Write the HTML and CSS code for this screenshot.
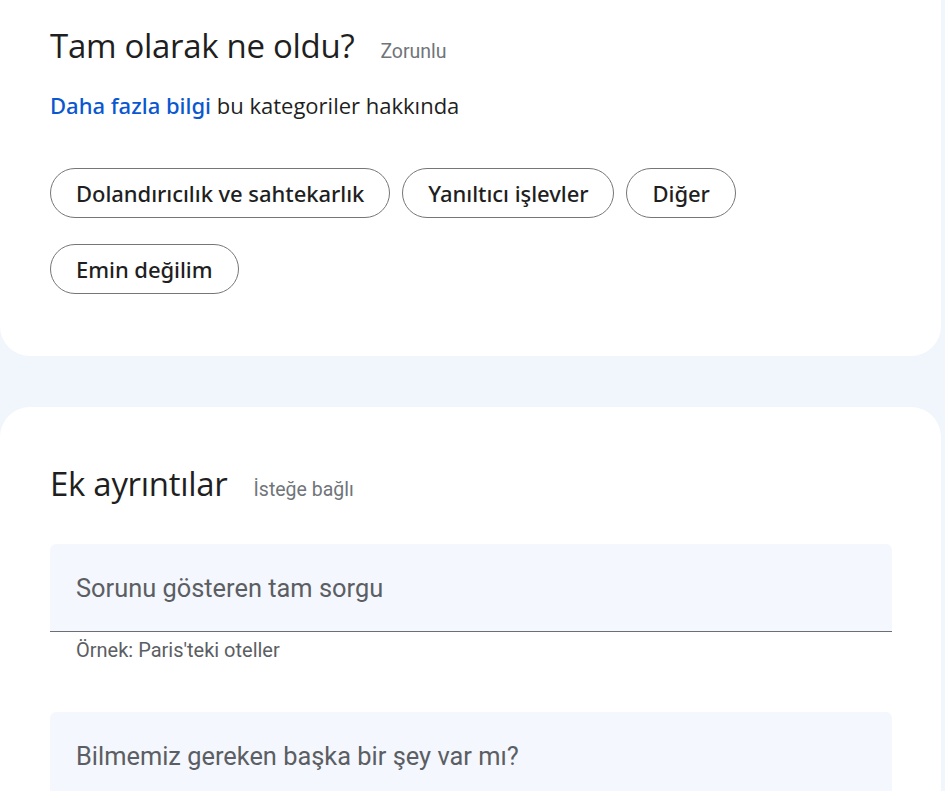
FILE: index.html
```html
<!DOCTYPE html>
<html lang="tr">
<head>
<meta charset="utf-8">
<title>Geri bildirim</title>
<link rel="stylesheet" href="styles.css">
</head>
<body>
<div class="page">
  <section class="card card-top">
    <div class="title-row">
      <h2 class="title">Tam olarak ne oldu?</h2>
      <span class="tag">Zorunlu</span>
    </div>
    <p class="info"><a class="link" href="#">Daha fazla bilgi</a> bu kategoriler hakkında</p>
    <div class="chips">
      <button class="chip">Dolandırıcılık ve sahtekarlık</button>
      <button class="chip">Yanıltıcı işlevler</button>
      <button class="chip">Diğer</button>
      <button class="chip">Emin değilim</button>
    </div>
  </section>
  <section class="card card-bottom">
    <div class="title-row">
      <h2 class="title">Ek ayrıntılar</h2>
      <span class="tag">İsteğe bağlı</span>
    </div>
    <div class="field">
      <div class="field-box"><span class="placeholder">Sorunu gösteren tam sorgu</span></div>
      <div class="helper">Örnek: Paris'teki oteller</div>
    </div>
    <div class="field field-next">
      <div class="field-box"><span class="placeholder">Bilmemiz gereken başka bir şey var mı?</span></div>
    </div>
  </section>
</div>
</body>
</html>
```
FILE: styles.css
```css
html, body {
  margin: 0;
  padding: 0;
}
body {
  background: #f1f5fc;
  font-family: "Open Sans", "Noto Sans", sans-serif;
  color: #1f1f1f;
  overflow: hidden;
  height: 791px;
}
.page {
  padding-right: 4px;
  display: flex;
  flex-direction: column;
  gap: 51px;
}
.card {
  background: #ffffff;
  padding-left: 50px;
  padding-right: 49px;
}
.card-top {
  border-radius: 0 0 30px 30px;
  padding-top: 26px;
  padding-bottom: 62px;
}
.card-bottom {
  border-radius: 30px 30px 0 0;
  padding-top: 57px;
  height: 600px;
}
.title-row {
  display: flex;
  align-items: baseline;
  gap: 26px;
}
.title {
  margin: 0;
  font-size: 33px;
  line-height: 40px;
  font-weight: 400;
  color: #1f1f1f;
  letter-spacing: -0.3px;
}
.tag {
  font-family: Roboto, "Noto Sans", sans-serif;
  font-size: 19.5px;
  color: #70757a;
}
.info {
  margin: 25px 0 0 0;
  font-size: 22px;
  line-height: 28px;
}
.link {
  color: #0b57d0;
  font-family: "Noto Sans", "Open Sans", sans-serif;
  font-weight: 500;
  text-decoration: none;
}
.chips {
  margin-top: 49px;
  display: flex;
  flex-wrap: wrap;
  gap: 26px 12px;
}
.chip {
  height: 50px;
  padding: 0 25px;
  border: 1px solid #747775;
  border-radius: 25px;
  background: #fff;
  font-family: "Noto Sans", "Open Sans", sans-serif;
  font-size: 22px;
  font-weight: 500;
  letter-spacing: -0.05px;
  color: #1f1f1f;
}
.field {
  margin-top: 40px;
}
.field-next {
  margin-top: 50px;
}
.field-box {
  height: 87px;
  background: #f4f7fd;
  border-radius: 6px 6px 0 0;
  border-bottom: 1px solid #6b6e72;
  display: flex;
  align-items: center;
  padding-left: 26px;
}
.placeholder {
  font-family: Roboto, "Noto Sans", sans-serif;
  font-size: 25.4px;
  color: #5b5e63;
}
.helper {
  font-family: Roboto, "Noto Sans", sans-serif;
  font-size: 20px;
  line-height: 24px;
  color: #5b5e63;
  padding-left: 26px;
  margin-top: 6px;
}
```
